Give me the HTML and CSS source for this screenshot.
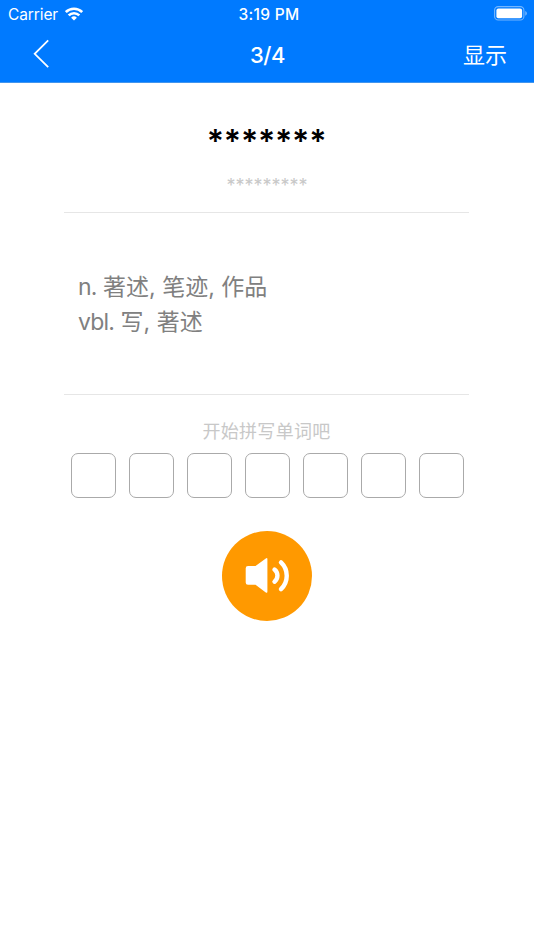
FILE: index.html
```
<!doctype html>
<html lang="zh-CN">
<head>
<meta charset="utf-8">
<title>3/4</title>
<link rel="stylesheet" href="styles.css">
</head>

<body>
<header class="top">
	<div class="status">
		<div class="carrier">
			<span>Carrier</span>
			<svg class="wifi" width="18" height="14" viewBox="0 0 18 14">
				<g fill="none" stroke="#fff" stroke-width="2.6">
					<path d="M.8 5.1a11.6 11.6 0 0 1 16.4 0"/>
					<path d="M3.7 8.4a7.5 7.5 0 0 1 10.6 0"/>
				</g>
				<path fill="#fff" d="M9 13.6l-2.9-2.9a4.1 4.1 0 0 1 5.8 0z"/>
			</svg>
		</div>
		<div class="time">3:19 PM</div>
		<div class="battery">
			<svg width="34" height="15" viewBox="0 0 34 15">
				<rect x=".6" y=".6" width="29.3" height="13.4" rx="3.6" fill="none" stroke="#fff" stroke-opacity=".45" stroke-width="1.1"/>
				<rect x="2.4" y="2.4" width="25.7" height="9.8" rx="2" fill="#fff"/>
				<path d="M31.3 4.9c2 .9 2 3.9 0 4.8z" fill="#fff" fill-opacity=".5"/>
			</svg>
		</div>
	</div>
	<nav class="nav">
		<a href="javascript:;" class="back">
			<svg width="18" height="30" viewBox="0 0 18 30"><path d="M16.2 1.4L2.7 14.8l13.5 13.4" fill="none" stroke="#fff" stroke-width="1.8"/></svg>
		</a>
		<h1 class="title">3/4</h1>
		<a href="javascript:;" class="show">显示</a>
	</nav>
</header>

<main class="card">
	<div class="word">
		<p class="spell">*******</p>
		<p class="phonetic">*********</p>
	</div>
	<div class="mean">
		<p><span class="pos">n.</span> 著述, 笔迹, 作品</p>
		<p><span class="pos">vbl.</span> 写, 著述</p>
	</div>
	<p class="tip">开始拼写单词吧</p>
	<ul class="letters">
		<li></li>
		<li></li>
		<li></li>
		<li></li>
		<li></li>
		<li></li>
		<li></li>
	</ul>
	<a href="javascript:;" class="sound">
		<svg width="90" height="90" viewBox="0 0 90 90">
			<path d="M26 35h7.5L43.8 27.5Q45.4 26.3 45.4 28.3V60.6Q45.4 62.6 43.8 61.4L33.5 53.8H26Q23.7 53.8 23.7 51.5V37.3Q23.7 35 26 35z" fill="#fff"/>
			<g fill="none" stroke="#fff" stroke-width="4.4" stroke-linecap="round">
				<path d="M52.5 38.5a7.8 7.8 0 0 1 0 12.2"/>
				<path d="M59 31.4a18.5 18.5 0 0 1 0 26.8"/>
			</g>
		</svg>
	</a>
</main>
</body>
</html>
```
FILE: styles.css
```
*{
	margin:0; padding:0; list-style:none; box-sizing:border-box;
}
body{
	background:#fff; font-family:Inter,"Noto Sans CJK SC",sans-serif;
}
a{
	text-decoration:none; color:#fff;
}
svg{
	display:block;
}
.top{
	height:83px; background:#007aff; color:#fff; border-bottom:1px solid #4295ee;
}
.status{
	height:27px; display:grid; grid-template-columns:1fr auto 1fr;
	align-items:center; padding:0 7px 0 8px;
	font-size:15.5px; line-height:27px;
}
	.carrier{
		display:flex; align-items:center; gap:7px; letter-spacing:-.1px;
	}
	.carrier span{
		padding-top:1px;
	}
	.wifi{
		margin-top:-1px;
	}
	.time{
		font-weight:500; letter-spacing:.3px; padding:1px 0 0 3px;
	}
	.battery{
		display:flex; justify-content:flex-end;
	}
	.battery svg{
		margin:-1px -1px 0 0;
	}
.nav{
	height:55px; display:grid; grid-template-columns:1fr auto 1fr;
	align-items:center; padding:0 27px 0 32px;
}
	.back{
		padding-bottom:1px;
	}
	.title{
		font-size:22px; font-weight:500; line-height:30px; letter-spacing:-.4px;
		padding:0 4px 0 0;
	}
	.show{
		justify-self:end; font-size:22px; font-weight:400; line-height:30px;
	}
.card{
	width:405px; margin:0 auto; position:relative; left:-.5px;
}
.word{
	height:130px; padding-top:41px; text-align:center; border-bottom:1px solid #e6e6e6;
}
	.spell{
		font-size:32px; line-height:36px; font-weight:600; color:#000;
		letter-spacing:-.2px;
	}
	.phonetic{
		margin-top:14px; font-size:18px; line-height:24px; color:#c8c8c8;
		padding-left:1px;
	}
.mean{
	height:182px; padding:2px 13px 0 14px; border-bottom:1px solid #e6e6e6;
	display:flex; flex-direction:column; justify-content:center;
	font-size:23px; line-height:35px; color:#808080;
}
	.pos{
		letter-spacing:-.8px;
	}
.tip{
	margin-top:23px; text-align:center; font-size:18px; line-height:27px; color:#c8c8c8;
	letter-spacing:.3px;
}
.letters{
	margin-top:8px; padding-left:1px; display:flex; justify-content:center; gap:13px;
}
	.letters li{
		width:45px; height:45px; border:1px solid #aaa; border-radius:7px;
	}
.sound{
	display:block; width:90px; height:90px; margin:32.5px auto 0;
	border-radius:50%; background:#f90;
}
```
